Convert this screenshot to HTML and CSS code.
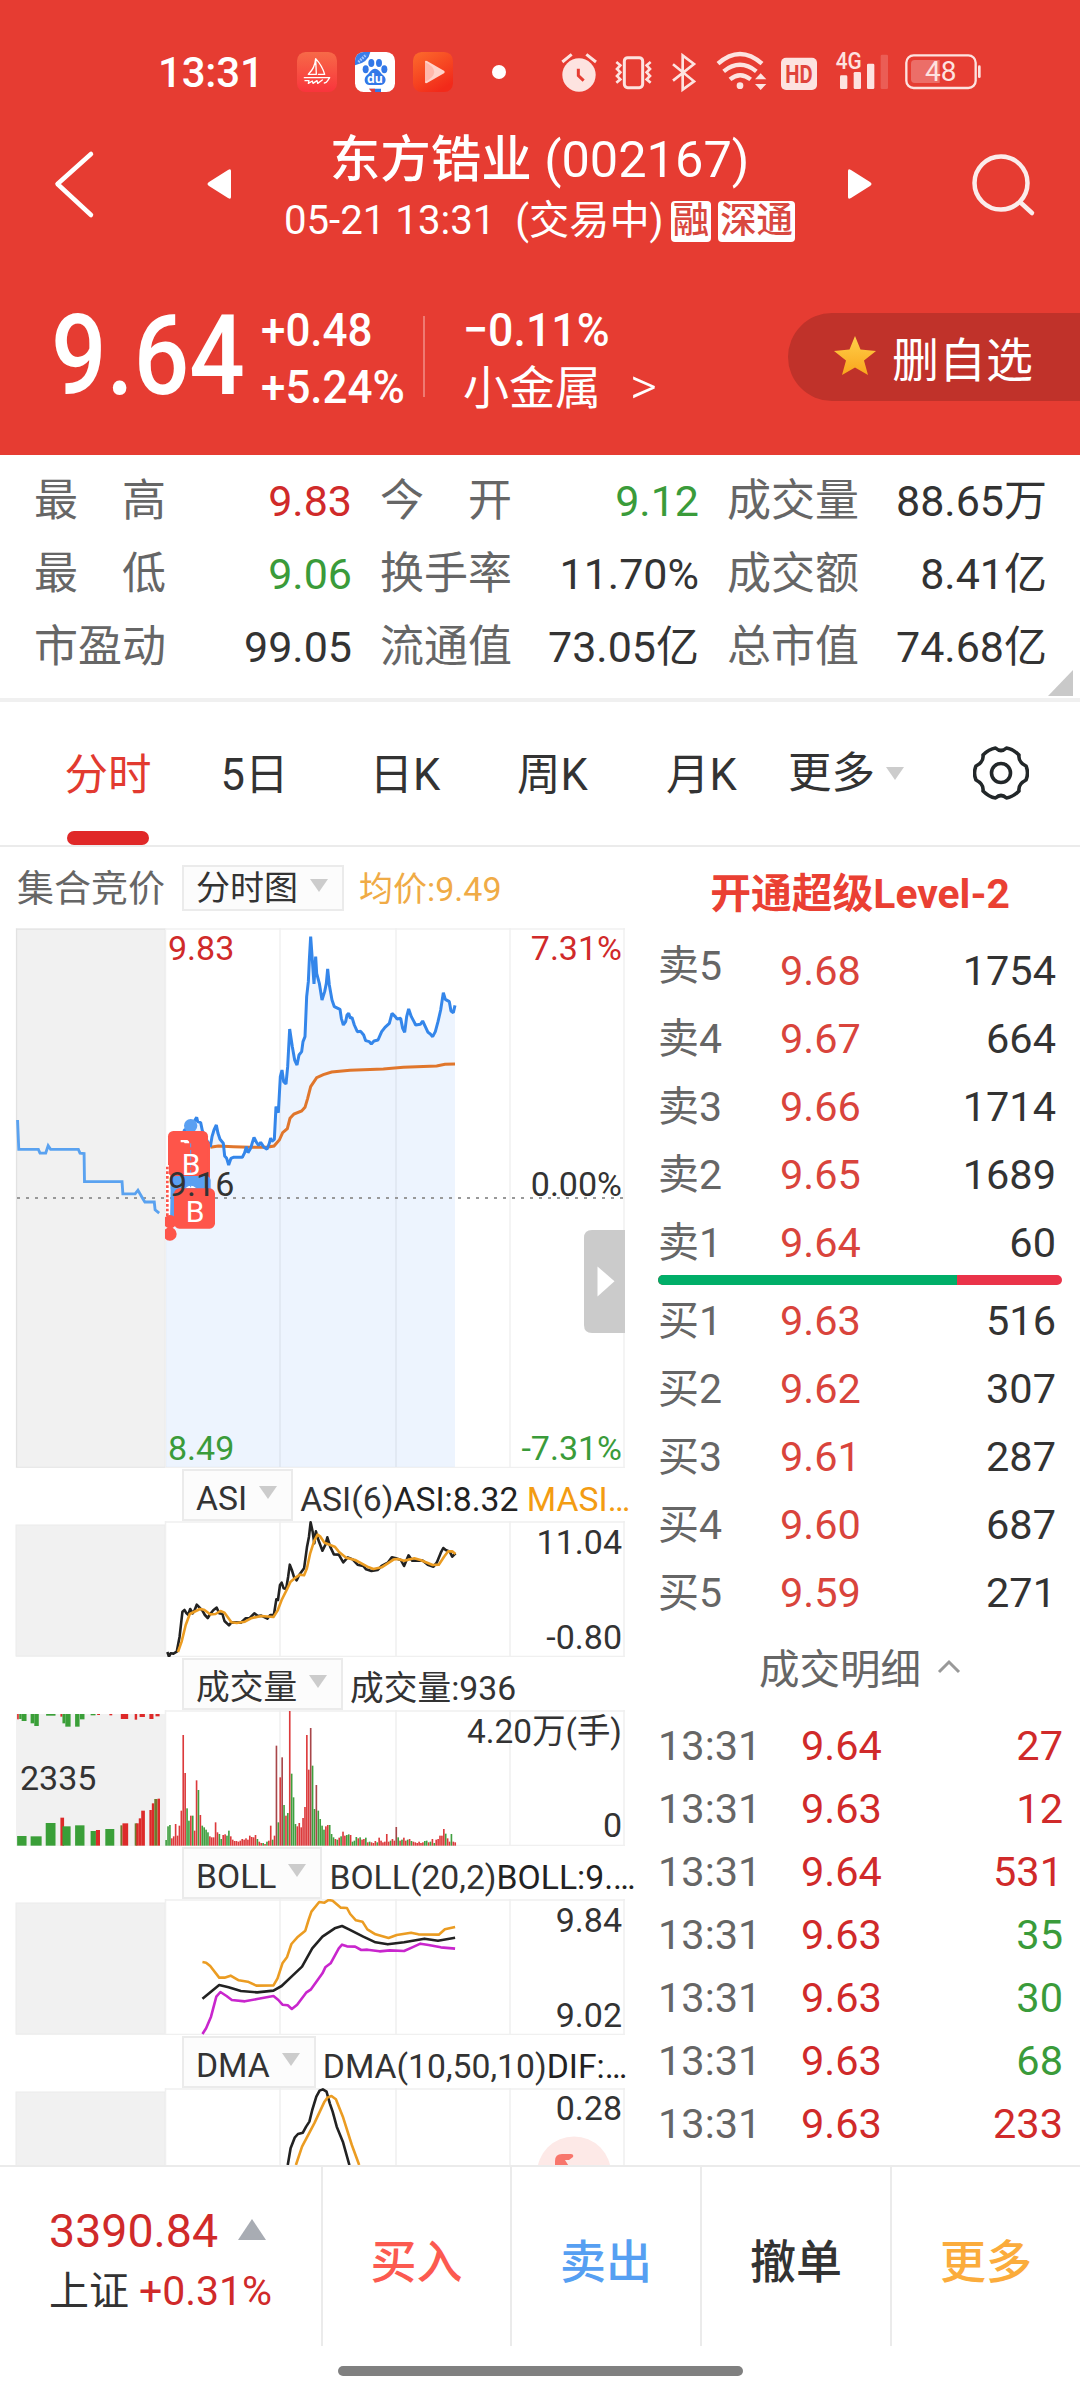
FILE: index.html
```html
<!DOCTYPE html>
<html lang="zh-CN">
<head>
<meta charset="utf-8">
<title>东方锆业 (002167)</title>
<link rel="stylesheet" href="styles.css">
</head>
<body>
<div class="screen">
  <header class="top">
    <div class="status">
      <span class="clock">13:31</span>
      <svg class="app" viewBox="0 0 120 120"><defs><linearGradient id="ga" x1="0" y1="0" x2="0" y2="1"><stop offset="0" stop-color="#f76a48"/><stop offset="1" stop-color="#f9343c"/></linearGradient></defs><rect width="120" height="120" rx="26" fill="url(#ga)"/><g fill="none" stroke="#fff" stroke-width="4" stroke-linejoin="round" stroke-linecap="round"><path d="M56 20Q54 48 34 67H58L56 20Q76 42 83 67H64M22 77H98L92 86Q88 93 82 93M24 86H36L34 94L46 87L48 94L60 86L62 94L76 84"/></g></svg>
      <svg class="app" viewBox="0 0 120 120"><defs><clipPath id="cb"><rect width="120" height="120" rx="26"/></clipPath></defs><g clip-path="url(#cb)"><rect width="120" height="120" fill="#fff"/><path d="M0 0H46Q40 32 0 40Z" fill="#3b7de8"/><path d="M10 30L34 8" stroke="#a8c8ff" stroke-width="8" stroke-dasharray="5 3"/><g fill="#3278e8"><ellipse cx="32" cy="52" rx="9" ry="12"/><ellipse cx="49" cy="33" rx="9" ry="12"/><ellipse cx="72" cy="33" rx="9" ry="12"/><ellipse cx="88" cy="52" rx="9" ry="12"/><path d="M60 50C72 50 75 62 84 69C98 80 92 99 76 99C66 99 54 99 44 99C28 99 24 80 36 69C46 62 48 50 60 50Z"/><path d="M42 110H78V120H60Z"/></g><path d="M42 110H60V120H50Z" fill="#e03c3c"/><text x="60" y="93" text-anchor="middle" class="du">du</text></g></svg>
      <svg class="app" viewBox="0 0 120 120"><defs><linearGradient id="gc" x1="0" y1="0" x2=".6" y2="1"><stop offset="0" stop-color="#fc6b2c"/><stop offset="1" stop-color="#f22a1a"/></linearGradient></defs><rect width="120" height="120" rx="26" fill="url(#gc)"/><path d="M36 30Q36 24 42 27L93 56Q98 60 93 64L42 93Q36 95 36 89Z" fill="#ffd3ca"/><path d="M36 30V89Q62 78 64 60Q62 42 36 30Z" fill="#ffb8ab"/></svg>
      <i class="dot"></i>
      <div class="sys">
        <svg width="38" height="64" viewBox="60 0 114 192"><circle cx="117" cy="105" r="50" fill="#fde3e0"/><path d="M67 66L95 43M139 43L168 66" stroke="#fde3e0" stroke-width="9"/><path d="M115 86V107L131 122" fill="none" stroke="#e63c32" stroke-width="9"/></svg>
        <svg width="38" height="64" viewBox="222 0 114 192"><g fill="none" stroke="#fde3e0"><rect x="253" y="53" width="55" height="90" rx="10" stroke-width="9"/><path d="M229 66L241 76L231 87L241 97L231 108L241 118L229 128M332 66L320 76L330 87L320 97L330 108L320 118L332 128" stroke-width="8"/></g></svg>
        <svg width="28" height="64" viewBox="390 0 84 192"><path d="M399 73L462 124L428 149V46L462 72L399 122" fill="none" stroke="#fde3e0" stroke-width="8"/></svg>
        <svg width="52" height="64" viewBox="528 0 156 192"><g fill="none" stroke="#fde3e0" stroke-width="13"><path d="M534 71Q600 13 666 71"/><path d="M551 94Q600 55 649 94"/><path d="M570 118Q600 93 632 118"/></g><circle cx="600" cy="137" r="10" fill="#fde3e0"/><path d="M645 118L662 100L679 118ZM645 132L662 150L679 132Z" fill="#fde3e0"/></svg>
        <svg width="38" height="64" viewBox="720 0 114 192"><rect x="723" y="53" width="108" height="97" rx="15" fill="#fde3e0"/><text x="777" y="129" text-anchor="middle" class="hd" textLength="82" lengthAdjust="spacingAndGlyphs">HD</text></svg>
        <svg width="56" height="64" viewBox="882 0 168 192"><g fill="#fde3e0"><rect x="900" y="106" width="22" height="41" rx="4"/><rect x="941" y="96" width="22" height="51" rx="4"/><rect x="981" y="71" width="22" height="76" rx="4"/><rect x="1022" y="44" width="22" height="103" rx="4" opacity=".2"/></g><text x="887" y="87" class="fourg" textLength="78" lengthAdjust="spacingAndGlyphs">4G</text></svg>
        <svg width="78" height="64" viewBox="1092 0 234 192"><rect x="1099" y="46" width="208" height="98" rx="22" fill="none" stroke="#fde3e0" stroke-width="7"/><path d="M1124 60H1199V129H1124Q1113 129 1113 118V71Q1113 60 1124 60Z" fill="#ec6e68"/><rect x="1314" y="76" width="8" height="38" rx="4" fill="#fde3e0"/><text x="1202" y="124" text-anchor="middle" class="batt">48</text></svg>
      </div>
    </div>
    <nav class="nav">
      <svg viewBox="0 104 207 145"><path d="M91 154L57.500 184L91 215" fill="none" stroke="#fff" stroke-width="4.500" stroke-linejoin="round" stroke-linecap="round"/></svg>
      <svg viewBox="207 104 24 145"><path d="M231 171V197Q231 200 228 198L209 186Q206 184 209 182L228 170Q231 168 231 171Z" fill="#fff"/></svg>
      <div class="title">
        <h1><b>东方锆业</b> (002167)</h1>
        <p>05-21 13:31&nbsp; (交易中)<span class="badge">融</span><span class="badge">深通</span></p>
      </div>
      <svg viewBox="848 104 24 145"><path d="M848 171V197Q848 200 851 198L870 186Q873 184 870 182L851 170Q848 168 848 171Z" fill="#fff"/></svg>
      <svg viewBox="872 104 208 145"><g fill="none" stroke="#fbeceb" stroke-width="4.500"><circle cx="1001" cy="183" r="26.500"/><path d="M1020 202L1032 213" stroke-linecap="round"/></g></svg>
    </nav>
    <section class="quote">
      <div class="price"><span>9.64</span></div>
      <div class="chg"><span>+0.48</span><span>+5.24%</span></div>
      <i class="vline"></i>
      <div class="sector"><span class="narrow">−0.11%</span><span>小金属<em>&gt;</em></span></div>
      <button class="fav"><svg width="44" height="40" viewBox="0 0 44 40"><defs><linearGradient id="gs" x1="0" y1="0" x2="0" y2="1"><stop offset="0" stop-color="#ffd04a"/><stop offset="1" stop-color="#f9a51c"/></linearGradient></defs><path d="M22 0L27.500 13.500L43 15L31 24.500L35 39L22 31.500L9 39L13 24.500L1 15L16.500 13.500Z" fill="url(#gs)"/></svg>删自选</button>
    </section>
  </header>

  <section class="stats">
    <div class="stat"><span>最　高</span><b class="up">9.83</b></div>
    <div class="stat"><span>今　开</span><b class="down">9.12</b></div>
    <div class="stat"><span>成交量</span><b>88.65万</b></div>
    <div class="stat"><span>最　低</span><b class="down">9.06</b></div>
    <div class="stat"><span>换手率</span><b>11.70%</b></div>
    <div class="stat"><span>成交额</span><b>8.41亿</b></div>
    <div class="stat"><span>市盈动</span><b>99.05</b></div>
    <div class="stat"><span>流通值</span><b>73.05亿</b></div>
    <div class="stat"><span>总市值</span><b>74.68亿</b></div>
    <i class="corner"></i>
  </section>

  <nav class="tabs">
    <span class="on">分时</span><span>5日</span><span>日K</span><span>周K</span><span>月K</span>
    <span class="more">更多<i class="tri"></i></span>
    <svg class="gear" width="56" height="56" viewBox="-28 -28 56 56"><path d="M-5.500 -25Q0 -20 5.500 -25Q12 -24 18 -18Q17 -11 25 -7Q28 0 25 7Q17 11 18 18Q12 24 5.500 25Q0 20 -5.500 25Q-12 24 -18 18Q-17 11 -25 7Q-28 0 -25 -7Q-17 -11 -18 -18Q-12 -24 -5.500 -25Z" fill="none" stroke="#222729" stroke-width="3.600" stroke-linejoin="round"/><circle r="9.500" fill="none" stroke="#222729" stroke-width="3.600"/></svg>
  </nav>

  <main class="body">
    <section class="charts">
      <div class="bar"><span class="auction">集合竞价</span><span class="select">分时图<i class="tri"></i></span><span class="avg">均价:9.49</span></div>
      <svg class="plot" width="640" height="540" viewBox="0 928 640 540">
        <rect x="16" y="928.500" width="149" height="539" fill="#f1f1f1"/>
        <path id="fill" fill="#edf4fe"/>
        <path d="M16 929H625M16 1467.500H625M16.500 928V1468M165.500 928V1468M280 928V1468M396 928V1468M510 928V1468M624 928V1468" stroke="#000" stroke-opacity=".06" stroke-width="1.500"/>
        <path d="M17 1198H624" stroke="#999" stroke-width="1.800" stroke-dasharray="3 6"/>
        <g transform="translate(0 860) scale(.40816)"><polyline fill="none" stroke="#5aa2f0" stroke-width="7" points="43,637 46,709 94,709 98,718 112,718 118,700 124,709 192,709 196,718 206,719 207,788 299,788 301,818 331,818 338,809 350,830 355,838 378,838 380,857 390,865"/></g>
        <g transform="translate(150 910) scale(.33333)" fill="none" stroke-linejoin="miter">
          <polyline stroke="#e0762c" stroke-width="9" points="181,712 205,708 250,710 300,712 350,712 372,708 388,690 398,668 412,656 420,625 432,612 455,603 465,592 473,565 482,530 500,503 520,494 545,486 600,481 700,477 760,472 860,468 885,463 915,462"/>
          <polyline id="line" stroke="#3486ea" stroke-width="9" stroke-linejoin="bevel" points="65,950 68,800 103,660 121,655 140,622 143,635 152,638 157,662 170,690 181,710 186,680 192,660 199,645 204,670 210,688 220,700 224,738 230,745 236,765 243,745 250,742 277,742 284,728 289,710 294,728 302,715 307,698 312,682 320,698 326,706 332,697 342,712 351,718 358,700 362,684 366,694 373,688 378,590 385,608 391,500 396,480 401,515 408,522 413,470 419,357 427,410 434,450 441,465 447,435 455,425 459,395 465,380 470,260 475,215 478,150 482,80 487,150 492,222 497,140 500,190 508,220 516,270 524,245 529,220 533,177 538,225 546,270 553,290 570,298 574,325 580,345 587,335 591,315 596,310 601,325 606,322 613,345 622,365 632,364 641,375 647,392 658,395 664,402 672,393 684,390 695,365 705,352 718,340 726,310 736,320 741,327 752,325 758,355 764,367 770,320 776,297 784,320 792,335 797,345 811,343 818,333 826,350 834,367 841,372 848,380 856,365 864,335 872,300 880,248 886,268 898,275 903,303 910,308 915,286"/>
          <g stroke="none">
            <circle cx="122" cy="647" r="20" fill="#5aa0f2"/>
            <rect x="62" y="770" width="90" height="150" fill="#5aa0f2"/>
            <rect x="62" y="690" width="118" height="140" rx="14" fill="#fe554a"/>
            <rect x="54" y="663" width="120" height="136" rx="16" fill="#fe554a"/>
            <path d="M62 808Q66 798 80 798H170Q184 800 182 818V838H62Z" fill="#5aa0f2"/>
            <path d="M92 690H112Q118 692 118 700H104L102 697H92Z" fill="#fff"/>
            <path d="M52 765V920" stroke="#fff" stroke-width="9"/>
            <path d="M52 770V920" stroke="#fe554a" stroke-width="8" stroke-dasharray="8 6"/>
            <path d="M45 921.800A20 20 0 1 1 45 948.200ZM45 958.800A20 20 0 1 1 45 985.200Z" fill="#fe554a"/>
            <rect x="72" y="835" width="123" height="121" rx="16" fill="#fe554a"/>
            <path d="M107 834Q122 820 138 834Z" fill="#fff"/>
          </g>
          <path d="M122 700V835" stroke="#5aa0f2" stroke-width="3" stroke-dasharray="12 8"/>
        </g>
        <g class="mark"><text x="191" y="1175" text-anchor="middle">B</text><text x="195" y="1221.500" text-anchor="middle">B</text></g>
        <g class="lbl"><text x="168" y="960" class="up">9.83</text><text x="168" y="1195.500">9.16</text><text x="168" y="1460" class="down">8.49</text>
        <text x="622" y="960" text-anchor="end" class="up">7.31%</text><text x="622" y="1195.500" text-anchor="end">0.00%</text><text x="622" y="1460" text-anchor="end" class="down">-7.31%</text></g>
        <path d="M625 1230H592Q584 1230 584 1238V1325Q584 1333 592 1333H625Z" fill="#cbcbcb"/><path d="M597.500 1266.500L614.500 1281.300L597.500 1296.500Z" fill="#fff"/>
      </svg>

      <div class="head"><span class="select">ASI<i class="tri"></i></span><span class="info">ASI(6)<b>ASI:8.32</b> <em>MASI…</em></span></div>
      <svg class="plot" width="640" height="136" viewBox="0 1521 640 136">
        <rect x="16" y="1525" width="149" height="131" fill="#f1f1f1" stroke="#ebebeb"/>
        <path d="M165.500 1522H625M16 1656.500H625M165.500 1521V1657M280 1521V1657M396 1521V1657M510 1521V1657M624 1521V1657" stroke="#f0f0f0" stroke-width="1.500"/>
        <g class="ind" transform="translate(0 1460) scale(.40816 .33333)">
          <polyline stroke="#222" points="410,576 414,590 418,580 425,581 433,575 440,530 447,455 452,450 457,460 461,464 466,447 472,460 477,450 482,434 489,443 496,452 502,465 509,474 515,462 523,450 531,443 537,460 545,462 550,483 561,496 567,487 590,488 602,475 612,474 623,460 632,468 640,467 655,476 662,465 671,465 677,418 681,420 686,375 690,368 695,385 701,387 706,350 710,314 715,330 720,350 727,361 733,345 745,325 752,262 757,230 761,187 766,215 770,250 774,214 780,240 790,272 797,255 802,232 809,260 818,283 830,284 841,307 852,292 864,298 876,314 890,318 897,328 910,333 925,330 935,318 950,308 960,292 970,295 982,300 990,318 1001,286 1010,302 1036,302 1048,314 1062,320 1070,308 1080,278 1086,264 1092,270 1102,275 1108,290 1116,280"/>
          <polyline stroke="#eb9c22" points="436,576 445,545 455,495 465,462 480,453 490,447 500,449 515,463 528,462 540,453 550,458 567,487 580,489 600,485 615,475 640,468 670,471 680,452 690,420 703,388 712,365 725,352 735,344 745,346 752,325 760,280 770,242 778,224 785,230 795,248 820,260 830,275 848,293 870,300 900,320 915,327 935,322 965,298 975,297 990,302 1015,295 1030,300 1060,315 1075,314 1088,290 1098,274 1108,274 1116,282"/>
        </g>
        <g class="lbl"><text x="622" y="1554" text-anchor="end">11.04</text><text x="622" y="1649" text-anchor="end">-0.80</text></g>
      </svg>

      <div class="head"><span class="select">成交量<i class="tri"></i></span><span class="info">成交量:936</span></div>
      <svg class="plot" width="640" height="136" viewBox="0 1710 640 136">
        <rect x="16" y="1714" width="149" height="132" fill="#f1f1f1"/>
        <path d="M165.500 1711H625M165.500 1845.500H625M165.500 1710V1846M280 1710V1846M396 1710V1846M510 1710V1846M624 1710V1846" stroke="#f0f0f0" stroke-width="1.500"/>
        <g id="vol" transform="translate(0 1460) scale(.40816 .33333)"></g>
        <g class="lbl"><text x="20" y="1789.700">2335</text><text x="622" y="1743" text-anchor="end" textLength="155" lengthAdjust="spacingAndGlyphs">4.20万(手)</text><text x="622" y="1837" text-anchor="end">0</text></g>
      </svg>

      <div class="head"><span class="select">BOLL<i class="tri"></i></span><span class="info">BOLL(20,2)<b>BOLL:9.…</b></span></div>
      <svg class="plot" width="640" height="136" viewBox="0 1899 640 136">
        <rect x="16" y="1903" width="149" height="131" fill="#f1f1f1" stroke="#ebebeb"/>
        <path d="M165.500 1900H625M16 2034.500H625M165.500 1899V2035M280 1899V2035M396 1899V2035M510 1899V2035M624 1899V2035" stroke="#f0f0f0" stroke-width="1.500"/>
        <g class="ind" transform="translate(0 1840) scale(.40816 .33333)">
          <polyline stroke="#eb9c22" points="496,366 505,368 515,378 537,413 550,413 565,407 585,421 607,425 628,437 670,436 680,415 692,370 703,352 714,312 730,290 748,272 756,240 763,215 782,186 795,188 805,180 815,182 835,203 850,204 858,222 872,241 888,245 900,268 920,283 952,294 972,285 1007,278 1025,283 1075,284 1090,268 1115,261"/>
          <polyline stroke="#222" points="496,476 537,435 560,442 590,453 630,457 670,452 690,438 720,403 740,380 765,325 790,290 820,265 838,258 855,268 890,290 920,307 950,313 990,307 1040,296 1073,302 1115,293"/>
          <polyline stroke="#c926cd" points="496,582 505,565 517,530 530,470 540,456 555,468 568,480 600,484 630,477 670,468 682,480 692,494 705,496 715,507 728,494 750,458 762,448 790,400 797,382 810,370 830,325 838,314 850,319 870,320 885,330 900,329 930,334 955,331 990,333 1010,322 1030,311 1050,315 1080,322 1115,326"/>
        </g>
        <g class="lbl"><text x="622" y="1931.700" text-anchor="end">9.84</text><text x="622" y="2026.700" text-anchor="end">9.02</text></g>
      </svg>

      <div class="head"><span class="select">DMA<i class="tri"></i></span><span class="info">DMA(10,50,10)<b>DIF:…</b></span></div>
      <svg class="plot" width="640" height="136" viewBox="0 2088 640 136">
        <rect x="16" y="2092" width="149" height="131" fill="#f1f1f1" stroke="#ebebeb"/>
        <path d="M165.500 2089H625M165.500 2088V2224M280 2088V2224M396 2088V2224M510 2088V2224M624 2088V2224" stroke="#f0f0f0" stroke-width="1.500"/>
        <g class="ind" transform="translate(0 1840) scale(.40816 .33333)">
          <polyline stroke="#222" points="705,975 712,925 722,893 730,882 742,878 750,860 758,845 765,810 775,770 783,752 791,748 800,755 808,790 815,815 825,860 840,905 856,975"/>
          <polyline stroke="#eb9c22" points="725,975 740,920 770,850 795,785 802,773 812,768 823,778 840,830 862,915 880,975"/>
        </g>
        <circle cx="574" cy="2173.500" r="37" fill="#fde9e7"/><path d="M555 2168V2161Q555 2154 562 2154H571Q574 2154 573 2157L569 2160H565L570 2168Z" fill="#f8766c"/>
        <g class="lbl"><text x="622" y="2120.300" text-anchor="end">0.28</text></g>
      </svg>
    </section>

    <aside class="book">
      <h2>开通超级Level-2</h2>
      <div class="row first"><span>卖5</span><b>9.68</b><i>1754</i></div>
      <div class="row"><span>卖4</span><b>9.67</b><i>664</i></div>
      <div class="row"><span>卖3</span><b>9.66</b><i>1714</i></div>
      <div class="row"><span>卖2</span><b>9.65</b><i>1689</i></div>
      <div class="row"><span>卖1</span><b>9.64</b><i>60</i></div>
      <div class="ratio"><i style="width:74%"></i></div>
      <div class="row"><span>买1</span><b>9.63</b><i>516</i></div>
      <div class="row"><span>买2</span><b>9.62</b><i>307</i></div>
      <div class="row"><span>买3</span><b>9.61</b><i>287</i></div>
      <div class="row"><span>买4</span><b>9.60</b><i>687</i></div>
      <div class="row"><span>买5</span><b>9.59</b><i>271</i></div>
      <h3>成交明细<svg width="24" height="16" viewBox="0 0 24 16"><path d="M2 13L12 3L22 13" fill="none" stroke="#999" stroke-width="3"/></svg></h3>
      <div class="deal"><span>13:31</span><b>9.64</b><i class="up">27</i></div>
      <div class="deal"><span>13:31</span><b>9.63</b><i class="up">12</i></div>
      <div class="deal"><span>13:31</span><b>9.64</b><i class="up">531</i></div>
      <div class="deal"><span>13:31</span><b>9.63</b><i class="down">35</i></div>
      <div class="deal"><span>13:31</span><b>9.63</b><i class="down">30</i></div>
      <div class="deal"><span>13:31</span><b>9.63</b><i class="down">68</i></div>
      <div class="deal"><span>13:31</span><b>9.63</b><i class="up">233</i></div>
    </aside>
  </main>

  <footer class="actions">
    <div class="index"><div class="idx up">3390.84<i class="arrow"></i></div><div class="sub">上证 <span class="up">+0.31%</span></div></div>
    <div class="act buy">买入</div><div class="act sell">卖出</div><div class="act">撤单</div><div class="act etc">更多</div>
  </footer>
  <div class="home"><i></i></div>
</div>
<script src="chart.js"></script>
</body>
</html>
```
FILE: styles.css
```css
* { box-sizing: border-box; }
body { margin: 0; background: #fff; font-family: Roboto, "Noto Sans CJK SC", sans-serif; color: #333; }
i, em { font-style: normal; }
h1, h2, h3, p { margin: 0; font-weight: 400; }
svg { display: block; flex: none; }
.screen { width: 1080px; height: 2400px; overflow: hidden; background: #fff; display: flex; flex-direction: column; }
.up { color: #d02a2a; fill: #d02a2a; }
.down { color: #3a9b3a; fill: #3a9b3a; }

.top { height: 455px; background: #e63c32; color: #fff; flex: none; }
.status { height: 104px; padding: 40px 0 0 158px; display: flex; align-items: center; }
.clock { width: 139px; font-size: 42px; font-weight: 500; line-height: 64px; padding-top: 2px; letter-spacing: -.2px; }
.app { width: 40px; height: 40px; margin-right: 18px; }
.dot { width: 14px; height: 14px; border-radius: 50%; background: #fff; margin-left: 21px; }
.sys { display: flex; margin-left: 54px; }
.sys svg + svg { margin-left: 16px; }
.sys svg:nth-child(3), .sys svg:nth-child(4) { margin-left: 18px; }
.sys svg:nth-child(5) { margin-left: 12px; }
.sys svg:nth-child(7) { margin-left: 14px; }
.du { font: 700 37px "Open Sans", sans-serif; fill: #fff; }
.hd { font: 700 79px Roboto, sans-serif; fill: #e0443b; }
.fourg { font: 500 70px Roboto, sans-serif; fill: #fde3e0; }
.batt { font: 400 84px Roboto, sans-serif; fill: #fde3e0; }

.nav { height: 145px; display: grid; grid-template-columns: 207px 24px 1fr 24px 208px; }
.nav svg { width: 100%; height: 145px; }
.title { padding-top: 25px; display: flex; flex-direction: column; align-items: center; white-space: nowrap; }
.title h1 { font-size: 50.500px; line-height: 62px; }
.title h1 b { font-weight: 500; }
.title p { font-size: 40.200px; line-height: 60px; display: flex; align-items: center; }
.badge { height: 41px; line-height: 40px; padding: 0 2px; margin-left: 7px; border-radius: 4px; background: #fff; color: #d9483f; font-size: 36.500px; font-weight: 500; }

.quote { height: 206px; padding: 64px 0 0 51px; display: flex; align-items: flex-start; }
.price { width: 210px; font-size: 111px; font-weight: 500; line-height: 87px; }
.price span, .chg span, .narrow { display: block; transform: scaleX(.88); transform-origin: 0 50%; }
.chg { width: 162px; margin-top: -12px; font-size: 47px; font-weight: 500; line-height: 57px; }
.chg span { transform: scaleX(.935); }
.sector .narrow { transform: scaleX(.95); }
.vline { width: 2px; height: 81px; margin-top: 3px; background: #ef7a72; }
.sector { margin: -12px auto 0 38px; font-size: 46px; line-height: 57px; }
.sector .narrow { font-weight: 500; font-size: 47px; }
.sector em { margin-left: 29px; font-size: 52px; font-weight: 300; }
.fav { width: 292px; height: 88px; padding: 0 0 2px 45px; border: 0; border-radius: 44px 0 0 44px; background: #c0322a; color: #fff; font: inherit; font-size: 47px; display: flex; align-items: center; gap: 15px; }

.stats { position: relative; height: 247px; padding: 10px 34px 0; display: grid; grid-template-columns: 318px 319px 320px; grid-auto-rows: 73px; column-gap: 28px; border-bottom: 4px solid #f0f0f0; flex: none; }
.stat { display: flex; justify-content: space-between; line-height: 73px; font-size: 44px; color: #666; white-space: nowrap; }
.stat b { font-weight: 400; font-size: 43px; color: #333; }
.stat b.up { color: #d02a2a; }
.stat b.down { color: #3a9b3a; }
.corner { position: absolute; right: 7px; bottom: 2px; border-left: 25px solid transparent; border-bottom: 26px solid #c9c9c9; }

.tabs { height: 145px; flex: none; padding-left: 38px; display: flex; border-bottom: 2px solid #ebebeb; font-size: 43.500px; line-height: 148px; white-space: nowrap; }
.tabs span { width: 140px; text-align: center; }
.tabs span:nth-child(n+2) { width: 153px; }
.tabs span:nth-child(3) { width: 148px; }
.tabs span:nth-child(4) { width: 147px; }
.tabs span:nth-child(5) { width: 151px; }
.tabs .on { color: #e23a30; position: relative; }
.tabs .on::after { content: ""; position: absolute; left: 29px; bottom: 0; width: 82px; height: 14px; border-radius: 7px; background: #e02828; }
.tabs span.more { width: 131px; display: flex; align-items: center; gap: 11px; padding-left: 11px; }
.tri { flex: none; border: 9.500px solid transparent; border-top: 13px solid #ccc; border-bottom: 0; }
.gear { margin: 43px 0 0 65px; }

.body { height: 1318px; flex: none; display: grid; grid-template-columns: 640px 440px; overflow: hidden; }
.charts { height: 1318px; overflow: hidden; font-size: 34px; }
.bar { height: 81px; padding: 18px 0 0 17px; display: flex; white-space: nowrap; line-height: 49px; }
.auction { width: 165px; font-size: 37px; color: #666; }
.avg { margin-left: 15px; color: #f0ab46; }
.select { flex: none; height: 52px; padding: 0 14px 0 12px; border: 2px solid #ebebeb; background: #fcfcfc; display: flex; align-items: center; gap: 12px; line-height: 48px; }
.bar .select { height: 46px; line-height: 46px; }
.select .tri { margin-top: -6px; }
.head { height: 53px; padding: 1px 0 0 182px; display: flex; white-space: nowrap; font-size: 33.700px; }
.info { margin-left: 7px; line-height: 61px; }
.head .select { line-height: 57px; padding-top: 7px; }
.head .tri { margin-top: -12px; }
.info b { font-weight: 400; color: #222; }
.info em { color: #f39c12; }
.lbl text { font-size: 34px; }
.lbl text:not(.up):not(.down) { fill: #333; }
.mark text { font-size: 30px; fill: #fff; }
.ind polyline { fill: none; stroke-width: 2.600px; vector-effect: non-scaling-stroke; stroke-linejoin: round; }

.book { font-size: 41.500px; }
.book b, .book i { font-weight: 400; }
.book h2 { height: 89px; padding-top: 4px; line-height: 87px; font-size: 40.800px; font-weight: 700; color: #ea4033; text-align: center; }
.row { height: 68px; line-height: 70px; padding: 0 24px 0 18px; display: flex; }
.row span { width: 122px; color: #666; font-size: 41px; }
.row b { flex: 1; color: #d9443c; }
.row.first span { line-height: 60px; }
.ratio { height: 10px; margin: -1px 18px 1px; border-radius: 5px; overflow: hidden; background: #ea3349; }
.ratio i { display: block; height: 10px; background: #00ae68; }
.book h3 { height: 88px; line-height: 93px; padding-left: 119px; font-size: 40.500px; color: #666; display: flex; align-items: center; gap: 16px; }
.book h3 svg { margin-top: -6px; }
.deal { height: 63px; line-height: 64px; padding: 0 17px 0 18px; display: flex; }
.deal span { width: 143px; color: #666; }
.deal b { flex: 1; color: #d02a2a; }

.actions { height: 181px; flex: none; border-top: 2px solid #ebebeb; display: grid; grid-template-columns: 321px 189px 190px 190px 190px; grid-template-rows: 100%; }
.index { padding: 37px 0 0 49px; }
.idx { font-size: 46.500px; line-height: 54px; display: flex; align-items: center; gap: 20px; }
.arrow { border: 14px solid transparent; border-bottom: 21px solid #a8acb3; border-top: 0; margin-top: -3px; }
.sub { font-size: 40px; line-height: 66px; }
.sub .up { font-size: 41px; }
.act { border-left: 2px solid #ebebeb; text-align: center; line-height: 190px; font-size: 46px; font-weight: 500; }
.buy { color: #fc5a50; }
.sell { color: #569ff2; }
.etc { color: #fbac3c; }
.home { padding-top: 20px; display: flex; justify-content: center; }
.home i { width: 405px; height: 10px; border-radius: 5px; background: #808080; }
```
FILE: chart.js
```js
// Area under the price line
const line = document.getElementById('line');
const pts = line.getAttribute('points').split(' ').map(p => p.split(',').map(Number));
document.getElementById('fill').setAttribute('d',
  'M166 1467V1240L' + pts.map(([x, y]) => (150 + x / 3).toFixed(1) + ' ' + (910 + y / 3).toFixed(1)).join('L') + 'V1467Z');

// Volume: r = rising, g = falling, m = mixed; the number is the bar height
const bars = ('g17 g58 g62 r22 r28 r65 r30 r60 r105 r332 r218 g112 g75 r90 g90 r45 r196 g167 r92 g60 g55 g48 g40 r28 r25 r25 r70 r40 g35 g20 r32 r34 g30 g45 r28 r18 r14 r14 r12 r15 ' +
  'r20 r18 r22 r18 r30 r26 r25 r32 g20 r12 r8 g8 r5 g12 r15 r60 g18 r30 m300 g70 r205 m265 g122 r90 g98 r404 g216 g145 g65 r58 r68 r55 r83 r116 r332 r228 m353 g240 g110 m182 g105 g80 ' +
  'g60 g48 r58 r62 g62 g35 g25 r20 g18 r24 g28 r42 r30 g32 g34 r32 g12 g15 g26 r22 g25 r18 r20 g24 r10 g12 r10 r8 r14 g10 r24 r15 r10 r12 r35 r12 g15 r20 r15 m56 g25 r15 g18 r24 r15 ' +
  'g18 r20 g14 r12 r10 r8 r12 r8 r10 g14 g15 r10 g12 r20 g8 r18 r20 r30 r30 r50 g36 r22 r12 g35 r12 r10').split(' ');
const color = { r: '#dc3a3c', g: '#3f9f3f', m: '#a8464a' };
const G = '#3a9f38', R = '#dd2a2a', M = '#6f7a2c';
let out = '';
const rect = (x, y, w, h, f) => { out += `<rect x="${x}" y="${y}" width="${w}" height="${h}" fill="${f}"/>`; };
bars.forEach((b, i) => {
  const h = +b.slice(1);
  rect((405 + 4.66 * i).toFixed(1), 1157 - h, 4, h, color[b[0]]);
});
[[42, 65, 1128, G], [75, 102, 1129, G], [112, 136, 1089, G], [148, 157, 1073, R], [153, 173, 1099, G], [184, 207, 1096, G],
 [222, 235, 1113, G], [235, 245, 1110, R], [258, 280, 1107, G], [295, 300, 1096, M], [300, 314, 1090, R], [330, 336, 1090, M],
 [334, 340, 1090, R], [340, 346, 1075, R], [346, 355, 1052, R], [366, 372, 1050, R], [372, 378, 1030, R], [378, 386, 1017, M],
 [386, 392, 1016, R]].forEach(([a, b, t, f]) => rect(a, t, b - a, 1157 - t, f));
[[42, 46, 778, R], [47, 53, 777, G], [53, 65, 783, G], [75, 84, 790, G], [84, 95, 798, G], [113, 136, 767, G], [148, 153, 770, R],
 [153, 160, 790, G], [160, 173, 800, G], [184, 195, 800, G], [196, 207, 778, G], [222, 234, 766, G], [238, 245, 765, R],
 [268, 275, 766, R], [296, 314, 777, R], [330, 336, 779, R], [342, 355, 771, R], [366, 376, 777, R], [381, 391, 769, R]]
  .forEach(([a, b, t, f]) => rect(a, 762, b - a, t - 762, f));
document.getElementById('vol').innerHTML = out;
```
